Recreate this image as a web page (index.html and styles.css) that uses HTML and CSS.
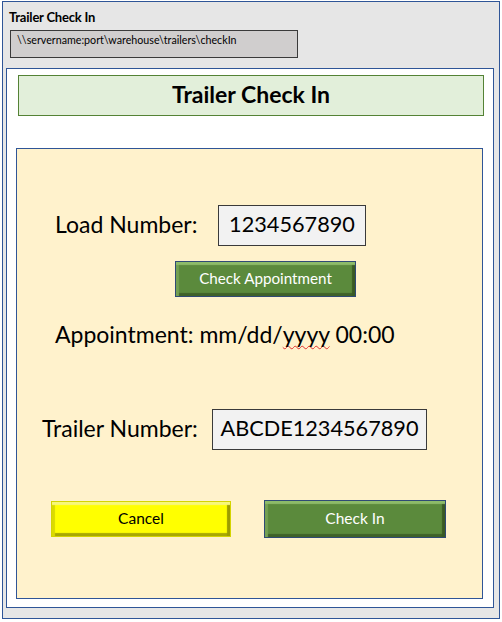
FILE: index.html
```html
<!DOCTYPE html>
<html>
<head>
<meta charset="utf-8">
<link rel="stylesheet" href="styles.css">
</head>
<body>
<div class="window">
  <div class="win-title">Trailer Check In</div>
  <div class="path">\\servername:port\warehouse\trailers\checkIn</div>
  <div class="panel">
    <div class="header">Trailer Check In</div>
    <div class="form">
      <div class="row load-row">
        <span class="label">Load Number:</span>
        <span class="field load-field">1234567890</span>
      </div>
      <button class="btn green check-appt">Check Appointment</button>
      <div class="appt">Appointment: mm/dd/<span class="spell">yyyy</span> 00:00</div>
      <div class="row trailer-row">
        <span class="label">Trailer Number:</span>
        <span class="field trailer-field">ABCDE1234567890</span>
      </div>
      <div class="actions">
        <button class="btn yellow cancel">Cancel</button>
        <button class="btn green checkin">Check In</button>
      </div>
    </div>
  </div>
</div>
</body>
</html>
```
FILE: styles.css
```css
html, body {
  margin: 0;
  padding: 0;
  background: #ffffff;
}
body {
  font-family: Lato, "Open Sans", sans-serif;
  color: #000;
}
.window {
  box-sizing: border-box;
  margin: 1px 0 0 2px;
  width: 498px;
  height: 618px;
  border: 1px solid #2F5597;
  background: #E6E6E6;
  padding: 0 0 0 3px;
}
.win-title {
  font-weight: bold;
  font-size: 13px;
  line-height: 15px;
  margin: 8px 0 0 3px;
  letter-spacing: -0.2px;
}
.path {
  box-sizing: border-box;
  margin: 5px 0 0 4px;
  width: 288px;
  height: 28px;
  background: #D0CECE;
  border: 1px solid #3A3A3A;
  font-size: 10.7px;
  line-height: 14px;
  padding: 2px 0 0 6px;
}
.panel {
  box-sizing: border-box;
  margin-top: 10px;
  width: 488px;
  height: 540px;
  background: #fff;
  border: 1px solid #2F5597;
  padding: 6px 0 0 9px;
}
.header {
  box-sizing: border-box;
  margin-left: 2px;
  width: 466px;
  height: 41px;
  background: #E2EFDA;
  border: 1px solid #548235;
  text-align: center;
  font-weight: bold;
  font-size: 23px;
  line-height: 36px;
}
.form {
  box-sizing: border-box;
  margin-top: 32px;
  width: 467px;
  height: 451px;
  background: #FFF2CC;
  border: 1px solid #2F5597;
  padding-top: 56px;
  display: flex;
  flex-direction: column;
  align-items: flex-start;
}
.row {
  display: flex;
  align-items: center;
}
.label {
  font-size: 23px;
  padding-bottom: 4px;
}
.field {
  box-sizing: border-box;
  height: 41px;
  background: #F2F2F2;
  border: 1px solid #3A3A3A;
  font-size: 21.7px;
  line-height: 36px;
  text-align: center;
}
.load-row {
  margin-left: 38px;
}
.load-row .label {
  width: 163px;
}
.load-field {
  width: 148px;
}
.trailer-row {
  margin-left: 25px;
  margin-top: 61px;
}
.trailer-row .label {
  width: 170px;
}
.trailer-field {
  width: 215px;
}
.btn {
  box-sizing: border-box;
  font-family: Lato, "Open Sans", sans-serif;
  font-size: 15.5px;
  cursor: pointer;
  padding: 0 0 3px 0;
}
.green {
  background: #5B8A3C;
  color: #fff;
  border: 1px solid #2F4A75;
  box-shadow:
    inset 0 4px 1px -1px #8DBB69,
    inset 4px 0 1px -1px #74A052,
    inset -4px 0 1px -1px #3A5A25,
    inset 0 -4px 1px -1px #3F6129;
}
.yellow {
  background: #FFFF00;
  color: #000;
  border: 1px solid #D4D400;
  box-shadow:
    inset 0 4px 1px -1px #F7F77A,
    inset 4px 0 1px -1px #DADA00,
    inset -4px 0 1px -1px #9C9C00,
    inset 0 -4px 1px -1px #A8A800;
}
.check-appt {
  margin: 15px 0 0 158px;
  width: 181px;
  height: 36px;
  font-size: 15.2px;
}
.appt {
  margin: 23px 0 0 38px;
  font-size: 23px;
  line-height: 28px;
}
.spell {
  text-decoration: underline wavy #E03030;
  text-decoration-thickness: 1px;
  text-underline-offset: 2px;
  text-decoration-skip-ink: none;
}
.actions {
  display: flex;
  align-items: center;
  margin: 50px 0 0 34px;
}
.cancel {
  width: 180px;
  height: 36px;
}
.checkin {
  margin-left: 33px;
  width: 182px;
  height: 38px;
}
```
